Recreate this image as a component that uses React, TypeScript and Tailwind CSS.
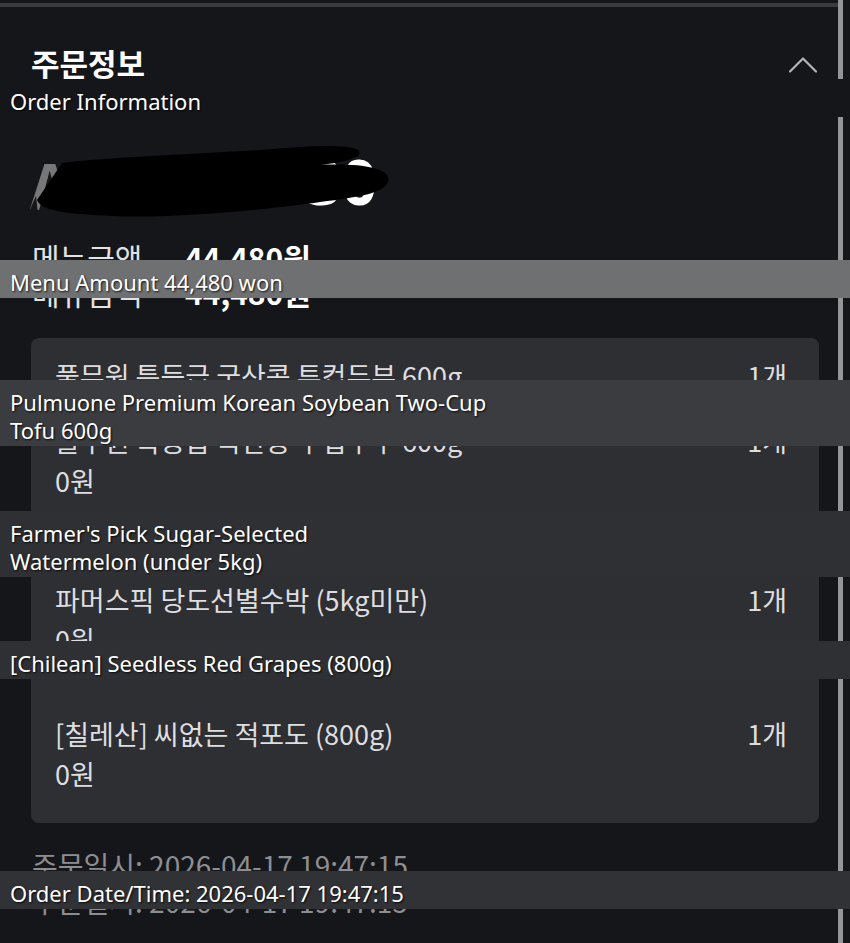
import React from "react";

type Item = { name: string; qty: string; price?: string; gap: string };

const ITEMS: Item[] = [
  { name: "풀무원 특등급 국산콩 투컵두부 600g", qty: "1개", gap: "mt-[18px]" },
  { name: "풀무원 특등급 국산콩 투컵두부 600g", qty: "1개", price: "0원", gap: "mt-[25px]" },
  { name: "파머스픽 당도선별수박 (5kg미만)", qty: "1개", price: "0원", gap: "mt-[79px]" },
  { name: "[칠레산] 씨없는 적포도 (800g)", qty: "1개", price: "0원", gap: "mt-[54px]" },
];

const OVERLAYS: { top: string; bg: string; lines: string[] }[] = [
  { top: "top-[79px]", bg: "bg-[#151619]", lines: ["Order Information"] },
  { top: "top-[260px]", bg: "bg-[#6f7072]", lines: ["Menu Amount 44,480 won"] },
  { top: "top-[380px]", bg: "bg-[#3b3c3f]", lines: ["Pulmuone Premium Korean Soybean Two-Cup", "Tofu 600g"] },
  { top: "top-[511px]", bg: "bg-[#2f3033]", lines: ["Farmer's Pick Sugar-Selected", "Watermelon (under 5kg)"] },
  { top: "top-[641px]", bg: "bg-[#2f3033]", lines: ["[Chilean] Seedless Red Grapes (800g)"] },
  { top: "top-[871px]", bg: "bg-[#313235]", lines: ["Order Date/Time: 2026-04-17 19:47:15"] },
];

function ChevronUp() {
  return (
    <svg width="28" height="16" viewBox="0 0 28 16" fill="none">
      <polyline points="1,14.5 14,1.5 27,14.5" stroke="#b4b4b6" strokeWidth="2.2" strokeLinecap="round" strokeLinejoin="round" />
    </svg>
  );
}

export default function App() {
  return (
    <div className="relative w-[850px] h-[943px] overflow-hidden bg-[#151619] font-['Noto_Sans_CJK_KR','Noto_Sans',sans-serif]">
      <div className="flex h-full">
        {/* main column */}
        <div className="w-[838px] flex flex-col">
          <div className="mt-[3px] h-[4px] bg-[#3a3b3e]" />

          {/* header */}
          <div className="mt-[36px] h-[40px] flex items-center justify-between pl-[31px] pr-[21px]">
            <h1 className="text-[31px] leading-[40px] font-bold text-white">주문정보</h1>
            <div className="mt-[4px]">
              <ChevronUp />
            </div>
          </div>

          {/* redacted order number */}
          <div className="relative mt-[47px] h-[100px]">
            <span className="absolute left-[30px] top-[22px] text-[62px] leading-[62px] font-bold text-[#77777a]">A</span>
            <span className="absolute left-[306px] top-[20px] text-[62px] leading-[62px] font-bold text-white font-['Noto_Sans',sans-serif]">30</span>
            <svg className="absolute left-0 top-0" width="420" height="100" viewBox="0 130 420 100">
              <path
                d="M37 200 L62 163 C100 158 190 154 260 150 C300 147 345 143 358 150 C364 156 352 161 320 165 C360 163 392 168 388 181 C385 193 360 197 320 202 C280 208 180 219 112 216 C70 214 42 212 37 200 Z"
                fill="#000"
              />
              <path d="M28 214 L38 214 L36 196 Z" fill="#151619" />
            </svg>
          </div>

          {/* menu amount (doubled row) */}
          <div className="mt-[10px] pl-[32px]">
            {[0, 1].map((i) => (
              <div key={i} className="flex h-[35px] items-center text-[30px] leading-[35px]">
                <span className="w-[153px] text-[#e2e2e4]">메뉴금액</span>
                <span className="font-bold text-white">44,480원</span>
              </div>
            ))}
          </div>

          {/* items card */}
          <div className="mt-[28px] ml-[31px] w-[788px] rounded-[8px] bg-[#2e2f32] pl-[24px] pr-[32px] pb-[29px]">
            {ITEMS.map((it, i) => (
              <div key={i} className={it.gap}>
                <div className="flex items-center justify-between text-[27px] leading-[40px] text-[#dedee0]">
                  <span>{it.name}</span>
                  <span>{it.qty}</span>
                </div>
                {it.price && <div className="text-[27px] leading-[40px] text-[#dedee0]">{it.price}</div>}
              </div>
            ))}
          </div>

          {/* order date (doubled) */}
          <div className="mt-[24px] pl-[32px] text-[28px] leading-[36px] text-[#8d8e91]">
            <div>주문일시: 2026-04-17 19:47:15</div>
            <div>주문일시: 2026-04-17 19:47:15</div>
          </div>
        </div>

        {/* scrollbar */}
        <div className="w-[5px] bg-[#959597]" />
        <div className="flex-1" />
      </div>

      {/* translation overlays */}
      {OVERLAYS.map((o, i) => (
        <div
          key={i}
          className={`absolute left-0 right-0 ${o.top} ${o.bg} px-[10px] pt-[8px] pb-[2px] font-['Noto_Sans',sans-serif] text-[22px] leading-[28px] text-white [text-shadow:1px_1px_2px_rgba(0,0,0,0.85)]`}
        >
          {o.lines.map((l, j) => (
            <div key={j}>{l}</div>
          ))}
        </div>
      ))}
    </div>
  );
}
